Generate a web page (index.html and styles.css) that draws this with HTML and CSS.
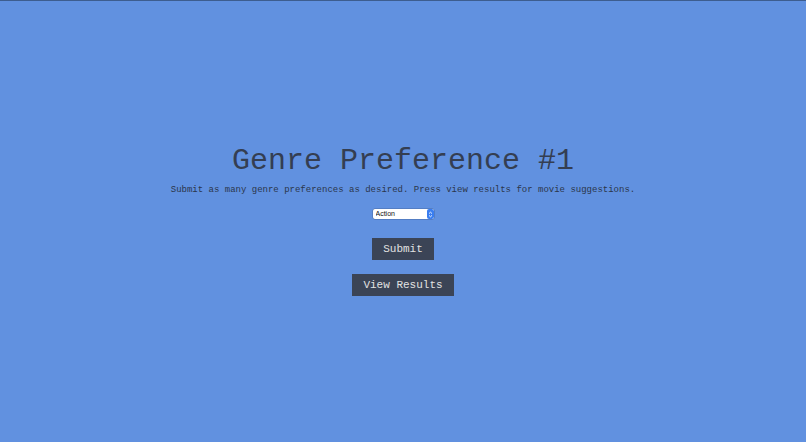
FILE: index.html
```html
<!DOCTYPE html>
<html>
<head>
<meta charset="utf-8">
<link rel="stylesheet" href="styles.css">
</head>
<body>
<main class="page">
  <h1 class="title">Genre Preference #1</h1>
  <p class="subtitle">Submit as many genre preferences as desired. Press view results for movie suggestions.</p>
  <div class="select-wrap">
    <select class="genre">
      <option>Action</option>
      <option>Comedy</option>
      <option>Drama</option>
    </select>
    <span class="select-arrow">
      <svg width="5" height="7" viewBox="0 0 5 7"><path d="M1 2.6 L2.5 1.2 L4 2.6 M1 4.4 L2.5 5.8 L4 4.4" fill="none" stroke="#fff" stroke-width="0.9"/></svg>
    </span>
  </div>
  <button class="btn btn-submit">Submit</button>
  <button class="btn btn-results">View Results</button>
</main>
</body>
</html>
```
FILE: styles.css
```css
html, body {
  margin: 0;
  padding: 0;
  height: 100%;
}
body {
  background: #6191e0;
  border-top: 1px solid #3d5d8f;
  box-sizing: border-box;
  font-family: "Liberation Mono", "Courier New", monospace;
  color: #333d52;
}
.page {
  display: flex;
  flex-direction: column;
  align-items: center;
  padding-top: 143px;
}
.title {
  margin: 0;
  font-size: 30px;
  line-height: 34px;
  font-weight: normal;
  color: #343e52;
}
.subtitle {
  margin: 7px 0 0;
  font-size: 9px;
  line-height: 11px;
  color: #2b364b;
}
.select-wrap {
  margin-top: 13px;
  display: flex;
  width: 61px;
  height: 10px;
  background: #fff;
  border-radius: 2px;
  box-shadow: 0 0 0 0.5px rgba(0,0,0,0.25);
  overflow: hidden;
}
.genre {
  appearance: none;
  -webkit-appearance: none;
  border: none;
  outline: none;
  background: transparent;
  flex: 1;
  min-width: 0;
  height: 10px;
  padding: 0 0 0 3px;
  margin: 0;
  font-family: "Liberation Sans", Arial, sans-serif;
  font-size: 7px;
  line-height: 10px;
  color: #111;
}
.select-arrow {
  width: 7px;
  height: 10px;
  background: #3a7ef0;
  border-radius: 2px;
  display: flex;
  align-items: center;
  justify-content: center;
}
.btn {
  border: none;
  margin: 0;
  background: #3b4456;
  color: #e2e2e2;
  font-family: "Liberation Mono", "Courier New", monospace;
  font-size: 11px;
  height: 22px;
  padding: 0 11px;
  cursor: pointer;
}
.btn-submit {
  margin-top: 19px;
}
.btn-results {
  margin-top: 14px;
}
```
